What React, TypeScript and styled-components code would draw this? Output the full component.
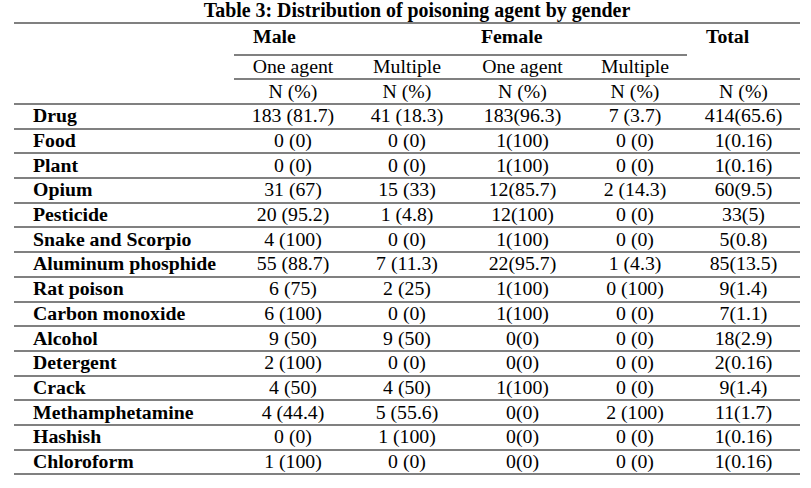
import React from "react";
import styled, { createGlobalStyle } from "styled-components";

const GlobalStyle = createGlobalStyle`
  html, body {
    margin: 0;
    padding: 0;
    background: #ffffff;
  }
  body {
    font-family: "Liberation Serif", "Times New Roman", serif;
    color: #000000;
  }
`;

const Page = styled.div`
  width: 811px;
  height: 488px;
  padding-left: 14px;
  box-sizing: border-box;
  background: #ffffff;
`;

const Title = styled.div`
  width: 786px;
  height: 22px;
  line-height: 21px;
  font-size: 19.9px;
  font-weight: 700;
  text-align: center;
  padding-left: 20px;
  box-sizing: border-box;
  white-space: nowrap;
`;

const Table = styled.table`
  width: 786px;
  table-layout: fixed;
  border-collapse: separate;
  border-spacing: 0;
  border-top: 2px solid #808080;
  font-size: 19.8px;
  line-height: 20px;
`;

const Rule = "2px solid #808080";

const HeadRow = styled.tr<{ $h: number }>`
  height: ${(p) => p.$h}px;
`;

const BlankCorner = styled.th`
  border-bottom: ${Rule};
  padding: 0;
`;

const GroupHead = styled.th<{ $ruled?: boolean }>`
  text-align: left;
  vertical-align: top;
  font-weight: 700;
  padding: 2px 0 0 19px;
  border-bottom: ${(p) => (p.$ruled ? Rule : "none")};
`;

const SubHead = styled.th<{ $ruled?: boolean }>`
  text-align: center;
  font-weight: 400;
  padding: 0 0 2px 0;
  vertical-align: middle;
  white-space: nowrap;
  border-bottom: ${(p) => (p.$ruled ? Rule : "none")};
`;

const DataRow = styled.tr`
  height: 24.7px;
`;

const Label = styled.td`
  font-weight: 700;
  text-align: left;
  padding: 0 0 2px 19px;
  white-space: nowrap;
  border-bottom: ${Rule};
  vertical-align: middle;
`;

const Value = styled.td`
  text-align: center;
  padding: 0 0 2px 0;
  white-space: nowrap;
  border-bottom: ${Rule};
  vertical-align: middle;
`;

const rows: [string, string, string, string, string, string][] = [
  ["Drug", "183 (81.7)", "41 (18.3)", "183(96.3)", "7 (3.7)", "414(65.6)"],
  ["Food", "0 (0)", "0 (0)", "1(100)", "0 (0)", "1(0.16)"],
  ["Plant", "0 (0)", "0 (0)", "1(100)", "0 (0)", "1(0.16)"],
  ["Opium", "31 (67)", "15 (33)", "12(85.7)", "2 (14.3)", "60(9.5)"],
  ["Pesticide", "20 (95.2)", "1 (4.8)", "12(100)", "0 (0)", "33(5)"],
  ["Snake and Scorpio", "4 (100)", "0 (0)", "1(100)", "0 (0)", "5(0.8)"],
  ["Aluminum phosphide", "55 (88.7)", "7 (11.3)", "22(95.7)", "1 (4.3)", "85(13.5)"],
  ["Rat poison", "6 (75)", "2 (25)", "1(100)", "0 (100)", "9(1.4)"],
  ["Carbon monoxide", "6 (100)", "0 (0)", "1(100)", "0 (0)", "7(1.1)"],
  ["Alcohol", "9 (50)", "9 (50)", "0(0)", "0 (0)", "18(2.9)"],
  ["Detergent", "2 (100)", "0 (0)", "0(0)", "0 (0)", "2(0.16)"],
  ["Crack", "4 (50)", "4 (50)", "1(100)", "0 (0)", "9(1.4)"],
  ["Methamphetamine", "4 (44.4)", "5 (55.6)", "0(0)", "2 (100)", "11(1.7)"],
  ["Hashish", "0 (0)", "1 (100)", "0(0)", "0 (0)", "1(0.16)"],
  ["Chloroform", "1 (100)", "0 (0)", "0(0)", "0 (0)", "1(0.16)"],
];

const widths = [220, 118, 110, 121, 104, 113];

export default function App() {
  return (
    <>
      <GlobalStyle />
      <Page>
        <Title>Table 3: Distribution of poisoning agent by gender</Title>
        <Table>
          <colgroup>
            {widths.map((w, i) => (
              <col key={i} style={{ width: `${w}px` }} />
            ))}
          </colgroup>
          <thead>
            <HeadRow $h={32}>
              <BlankCorner rowSpan={3} />
              <GroupHead colSpan={2} $ruled>
                Male
              </GroupHead>
              <GroupHead colSpan={2} $ruled>
                Female
              </GroupHead>
              <GroupHead rowSpan={2} $ruled>
                Total
              </GroupHead>
            </HeadRow>
            <HeadRow $h={24}>
              <SubHead $ruled>One agent</SubHead>
              <SubHead $ruled>Multiple</SubHead>
              <SubHead $ruled>One agent</SubHead>
              <SubHead $ruled>Multiple</SubHead>
            </HeadRow>
            <HeadRow $h={25}>
              <SubHead $ruled>N (%)</SubHead>
              <SubHead $ruled>N (%)</SubHead>
              <SubHead $ruled>N (%)</SubHead>
              <SubHead $ruled>N (%)</SubHead>
              <SubHead $ruled>N (%)</SubHead>
            </HeadRow>
          </thead>
          <tbody>
            {rows.map((r) => (
              <DataRow key={r[0]}>
                <Label>{r[0]}</Label>
                {r.slice(1).map((v, i) => (
                  <Value key={i}>{v}</Value>
                ))}
              </DataRow>
            ))}
          </tbody>
        </Table>
      </Page>
    </>
  );
}
